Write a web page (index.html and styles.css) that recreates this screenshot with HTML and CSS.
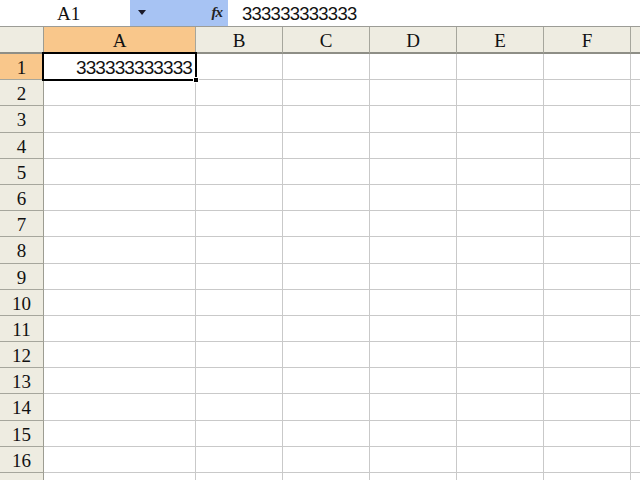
FILE: index.html
```html
<!DOCTYPE html>
<html>
<head>
<meta charset="utf-8">
<link rel="stylesheet" href="styles.css">
</head>
<body>
<div class="bar">
  <div class="namebox">A1</div>
  <div class="drop"><span class="tri"></span></div>
  <div class="fx">fx</div>
  <div class="formula">333333333333</div>
</div>
<div class="sheet">
  <div class="row head">
    <div class="c rh corner"></div>
    <div class="c ca sel">A</div><div class="c cb">B</div><div class="c cb">C</div><div class="c cb">D</div><div class="c cb">E</div><div class="c cb">F</div><div class="c cg"></div>
  </div>
  <div class="row">
    <div class="c rh sel">1</div>
    <div class="c ca active"><span class="val">333333333333</span><span class="frame"></span><span class="handle"></span></div><div class="c cb"></div><div class="c cb"></div><div class="c cb"></div><div class="c cb"></div><div class="c cb"></div><div class="c cg"></div>
  </div>
  <div class="row"><div class="c rh">2</div><div class="c ca"></div><div class="c cb"></div><div class="c cb"></div><div class="c cb"></div><div class="c cb"></div><div class="c cb"></div><div class="c cg"></div></div>
  <div class="row"><div class="c rh">3</div><div class="c ca"></div><div class="c cb"></div><div class="c cb"></div><div class="c cb"></div><div class="c cb"></div><div class="c cb"></div><div class="c cg"></div></div>
  <div class="row"><div class="c rh">4</div><div class="c ca"></div><div class="c cb"></div><div class="c cb"></div><div class="c cb"></div><div class="c cb"></div><div class="c cb"></div><div class="c cg"></div></div>
  <div class="row"><div class="c rh">5</div><div class="c ca"></div><div class="c cb"></div><div class="c cb"></div><div class="c cb"></div><div class="c cb"></div><div class="c cb"></div><div class="c cg"></div></div>
  <div class="row"><div class="c rh">6</div><div class="c ca"></div><div class="c cb"></div><div class="c cb"></div><div class="c cb"></div><div class="c cb"></div><div class="c cb"></div><div class="c cg"></div></div>
  <div class="row"><div class="c rh">7</div><div class="c ca"></div><div class="c cb"></div><div class="c cb"></div><div class="c cb"></div><div class="c cb"></div><div class="c cb"></div><div class="c cg"></div></div>
  <div class="row"><div class="c rh">8</div><div class="c ca"></div><div class="c cb"></div><div class="c cb"></div><div class="c cb"></div><div class="c cb"></div><div class="c cb"></div><div class="c cg"></div></div>
  <div class="row"><div class="c rh">9</div><div class="c ca"></div><div class="c cb"></div><div class="c cb"></div><div class="c cb"></div><div class="c cb"></div><div class="c cb"></div><div class="c cg"></div></div>
  <div class="row"><div class="c rh">10</div><div class="c ca"></div><div class="c cb"></div><div class="c cb"></div><div class="c cb"></div><div class="c cb"></div><div class="c cb"></div><div class="c cg"></div></div>
  <div class="row"><div class="c rh">11</div><div class="c ca"></div><div class="c cb"></div><div class="c cb"></div><div class="c cb"></div><div class="c cb"></div><div class="c cb"></div><div class="c cg"></div></div>
  <div class="row"><div class="c rh">12</div><div class="c ca"></div><div class="c cb"></div><div class="c cb"></div><div class="c cb"></div><div class="c cb"></div><div class="c cb"></div><div class="c cg"></div></div>
  <div class="row"><div class="c rh">13</div><div class="c ca"></div><div class="c cb"></div><div class="c cb"></div><div class="c cb"></div><div class="c cb"></div><div class="c cb"></div><div class="c cg"></div></div>
  <div class="row"><div class="c rh">14</div><div class="c ca"></div><div class="c cb"></div><div class="c cb"></div><div class="c cb"></div><div class="c cb"></div><div class="c cb"></div><div class="c cg"></div></div>
  <div class="row"><div class="c rh">15</div><div class="c ca"></div><div class="c cb"></div><div class="c cb"></div><div class="c cb"></div><div class="c cb"></div><div class="c cb"></div><div class="c cg"></div></div>
  <div class="row"><div class="c rh">16</div><div class="c ca"></div><div class="c cb"></div><div class="c cb"></div><div class="c cb"></div><div class="c cb"></div><div class="c cb"></div><div class="c cg"></div></div>
  <div class="row"><div class="c rh"></div><div class="c ca"></div><div class="c cb"></div><div class="c cb"></div><div class="c cb"></div><div class="c cb"></div><div class="c cb"></div><div class="c cg"></div></div>
</div>
</body>
</html>
```
FILE: styles.css
```css
html, body {
  margin: 0;
  padding: 0;
  background: #ffffff;
}
body {
  width: 640px;
  height: 480px;
  overflow: hidden;
}
.bar {
  display: flex;
  height: 26px;
  border-bottom: 1px solid #9c9c96;
  background: #ffffff;
}
.namebox {
  width: 130px;
  box-sizing: border-box;
  padding-left: 57px;
  font-family: "Liberation Serif", serif;
  font-size: 19px;
  line-height: 27px;
  color: #111;
}
.drop {
  width: 65px;
  background: #a7c3f3;
  position: relative;
}
.tri {
  position: absolute;
  left: 8px;
  top: 10px;
  width: 0;
  height: 0;
  border-left: 4px solid transparent;
  border-right: 4px solid transparent;
  border-top: 5px solid #1a1a2a;
}
.fx {
  width: 33px;
  background: #a7c3f3;
  box-sizing: border-box;
  text-align: right;
  padding-right: 6px;
  font-family: "Liberation Serif", serif;
  font-style: italic;
  font-weight: bold;
  font-size: 15px;
  line-height: 24px;
  letter-spacing: -1px;
  color: #222;
}
.formula {
  padding-left: 14px;
  font-family: "Liberation Sans", sans-serif;
  font-size: 18.5px;
  letter-spacing: -0.75px;
  line-height: 27px;
  color: #111;
}
.sheet {
  display: flex;
  flex-direction: column;
}
.row {
  display: flex;
  height: 26.2px;
  flex: none;
}
.row.head {
  height: 27px;
}
.c {
  box-sizing: border-box;
  border-right: 1px solid #c9c9c9;
  border-bottom: 1px solid #c9c9c9;
  flex: none;
}
.rh {
  width: 44px;
  background: #eeece1;
  border-right: 1px solid #9d9d92;
  border-bottom: 1px solid #a6a69c;
  text-align: center;
  font-family: "Liberation Serif", serif;
  font-size: 19px;
  line-height: 27px;
  color: #111;
}
.ca { width: 152px; }
.cb { width: 87px; }
.cg { width: 10px; border-right: none; }
.head .c {
  background: #eeece1;
  border-right: 1px solid #a6a69c;
  border-bottom: 2px solid #8e8e86;
  text-align: center;
  font-family: "Liberation Serif", serif;
  font-size: 19px;
  line-height: 27px;
  color: #111;
}
.head .corner {
  border-right: 1px solid #9d9d92;
}
.head .c.sel,
.rh.sel {
  background: #f9c78b;
}
.active {
  position: relative;
  text-align: right;
  font-family: "Liberation Sans", sans-serif;
  font-size: 19px;
  letter-spacing: -0.9px;
  line-height: 27px;
  color: #111;
}
.val {
  padding-right: 3px;
}
.frame {
  position: absolute;
  left: -2px;
  top: -2px;
  right: -2px;
  bottom: -2px;
  border: 2px solid #000;
  pointer-events: none;
}
.handle {
  position: absolute;
  right: -4px;
  bottom: -4px;
  width: 6px;
  height: 6px;
  background: #000;
  border: 1px solid #fff;
  box-sizing: border-box;
}
```
